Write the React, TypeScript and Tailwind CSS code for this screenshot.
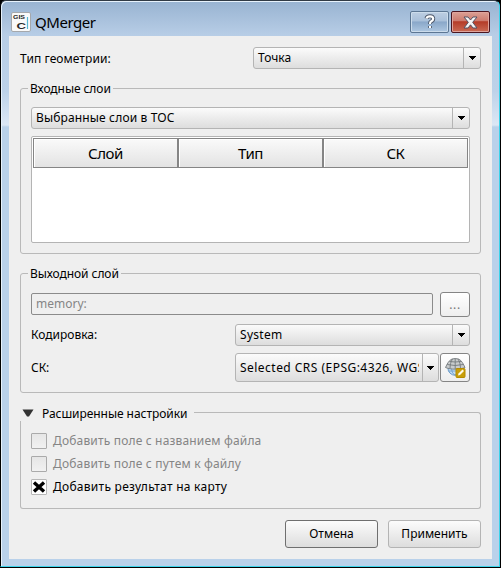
import type { ReactNode } from "react";

function Label({ children, className = "" }: { children: ReactNode; className?: string }) {
  return <span className={`inline-block whitespace-pre leading-[16px] ${className}`}>{children}</span>;
}

function Combo({ children, className = "", arrow = "w-[17px]" }: { children: ReactNode; className?: string; arrow?: string }) {
  return (
    <div className={`flex shrink-0 overflow-hidden rounded-[3px] border border-[#b4b4b4] bg-linear-to-b from-[#fbfbfb] to-[#dddddd] ${className}`}>
      <div className="flex min-w-0 flex-1 items-center overflow-hidden pl-[4px]">{children}</div>
      <div className={`flex shrink-0 items-center justify-center border-l border-[#b4b4b4] ${arrow}`}>
        <svg width="7" height="4" viewBox="0 0 7 4" shapeRendering="crispEdges"><path d="M0 0h7v1H6v1H5v1H4v1H3V3H2V2H1V1H0z" /></svg>
      </div>
    </div>
  );
}

function Check({ checked = false, children }: { checked?: boolean; children: ReactNode }) {
  return (
    <div className={`flex h-[16px] items-center gap-[6px] ${checked ? "text-black" : "text-[#858585]"}`}>
      <span className={`flex size-[16px] shrink-0 items-center justify-center rounded-[1px] border ${checked ? "border-[#b7b7b7] bg-white" : "border-[#aaa] bg-linear-to-b from-[#e6e6e6] to-[#f1f1f1]"}`}>
        {checked && (
          <svg width="14" height="14" viewBox="0 0 14 14" className="shrink-0"><path d="M2 2.500 12 11.500M12 2.500 2 11.500" stroke="#000" strokeWidth="3.400" /></svg>
        )}
      </span>
      {children}
    </div>
  );
}

function Globe() {
  return (
    <svg width="22" height="22" viewBox="0 0 22 22">
      <circle cx="11.200" cy="11" r="7.300" fill="#c3dcf3" stroke="#6799c8" />
      <path d="M7.500 10c0 4 1 7 3.500 8M14.500 10c0 4-1 7-3.500 8M4.500 14h13" fill="none" stroke="#6799c8" strokeWidth=".8" />
      <path d="M1.500 10.500C3 7.500 4.500 3.500 8 2q3.300-1 6.500 0c3.500 1.500 5 5.500 6.500 8.500-5 2.200-14.500 2.200-19.500 0z" fill="#c9cccd" stroke="#74797d" strokeWidth=".9" />
      <path d="M3.200 7.500q8 2 16 0M5.500 4.500q5.700 1 11.500 0M8.500 2C6.500 5 6.200 8 6 11.500M11.200 1.500V12M14 2c2 3 2.300 6 2.500 9.500" fill="none" stroke="#74797d" strokeWidth=".9" />
      <rect x="12" y="11.500" width="9" height="9" rx="1" fill="#c89e09" stroke="#b58c00" />
      <path d="m14 18.500.5-2 4-4 1.500 1.500-4 4z" fill="#fffbe7" />
    </svg>
  );
}

const group = "rounded-[3px] border border-[#b9b9b9]";
const pushButton = "flex h-[28px] w-[93px] items-center justify-center rounded-[3px] border bg-linear-to-b from-[#fcfcfc] to-[#dddddd]";

export default function App() {
  return (
    <div className="h-[568px] w-[501px] overflow-hidden bg-black text-black">
      <div className="flex h-[567px] w-[500px] flex-col rounded-t-[6px] border border-t-[#303a45] border-r-[#3bd3ea] border-b-[#3bd3ea] border-l-black bg-[#b9d1ea] bg-[linear-gradient(180deg,#98b3d1_0px,#b7cde6_34px,#bdd2e9_90px,#dce7f5_124px,#b9d1ea_126px)] shadow-[inset_1px_1px_0_#e7f2fc] [font-family:'Noto_Sans','Open_Sans',sans-serif] text-[12px]">
        <header className="flex h-[35px] shrink-0 items-start pl-[10px] pr-[9px]">
          <svg width="20" height="20" viewBox="0 0 20 20" className="mt-[11px] shrink-0">
            <rect x=".5" y=".5" width="19" height="19" rx="1.500" fill="#fafafa" stroke="#a5a8ac" />
            <text x="2" y="6.500" fontSize="6" fontWeight="700" fontFamily="Liberation Sans, sans-serif" textLength="12" lengthAdjust="spacingAndGlyphs" fill="#222">GIS</text>
            <text x="5.500" y="17.200" fontSize="9.500" fontWeight="700" fontFamily="Liberation Sans, sans-serif" textLength="9.500" lengthAdjust="spacingAndGlyphs" fill="#292929">C</text>
            <path d="M16.500 5v12" stroke="#55b6d2" strokeWidth="1.200" />
          </svg>
          <span className="mt-[11px] ml-[4px] flex-1 text-[15px] leading-[20px] tracking-[-0.45px]">QMerger</span>
          <div className="mt-[10px] flex gap-[2px]">
            <button className="flex h-[22px] w-[39px] items-center justify-center rounded-[2px] border border-[#5c7693] bg-[linear-gradient(#bdcee2_0%,#a8bfd9_47%,#88a6c8_48%,#aec7e1_100%)] shadow-[inset_0_0_0_1px_#ccdceb]">
              <svg width="12" height="16" viewBox="0 0 12 16"><path d="M2.500 4.500Q3 2.300 6 2.300t3.200 2.400Q9.200 6.500 7 7.500 6 8 6 10M6 12v2" fill="none" stroke="#4b5668" strokeWidth="4" /><path d="M2.500 4.500Q3 2.300 6 2.300t3.200 2.400Q9.200 6.500 7 7.500 6 8 6 10M6 12v2" fill="none" stroke="#fff" strokeWidth="2.200" /></svg>
            </button>
            <button className="flex h-[22px] w-[39px] items-center justify-center rounded-[2px] border border-[#4b1620] bg-[linear-gradient(#dba095_0%,#cc796c_46%,#b43b28_48%,#ca6b55_100%)] shadow-[inset_0_0_0_1px_#dfa49c]">
              <svg width="15" height="13" viewBox="0 0 15 13" className="shrink-0"><path d="M1 1h4l2.500 3L10 1h4L9.700 6.300 14 12h-4L7.500 8.800 5 12H1l4.300-5.700z" fill="#f5f5f5" stroke="#525263" /></svg>
            </button>
          </div>
        </header>

        <main className="ml-[8px] flex h-[523px] w-[483px] flex-col bg-[#efefef] px-[11px] pt-[11px]">
          <div className="flex h-[22px] shrink-0 items-center justify-between">
            <Label className="pt-[2px] tracking-[0.07px]">Тип геометрии:</Label>
            <Combo className="h-[22px] w-[228px]"><Label>Точка</Label></Combo>
          </div>

          <section className={`${group} mt-[19px] h-[166px] shrink-0 px-[10px]`}>
            <div className="-mt-[9px] ml-[-3px] h-[16px]"><Label className="bg-[#efefef] px-[2px] tracking-[-0.07px]">Входные слои</Label></div>
            <Combo className="mt-[11px] h-[22px] w-[439px]"><Label className="tracking-[0.15px]">Выбранные слои в TOC</Label></Combo>
            <div className="mt-[7px] h-[107px] w-[439px] rounded-[2px] border border-[#b4b4b4] bg-white p-[1px]">
              <div className="grid h-[30px] grid-cols-[145px_145px_145px] bg-[#efefef] text-[15px] tracking-[-0.4px]">
                {["Слой", "Тип", "СК"].map((name) => (
                  <div key={name} className="flex items-center justify-center border border-[#858585] bg-linear-to-b from-[#fafafa] to-[#e3e3e3] shadow-[inset_1px_1px_0_#fff]">{name}</div>
                ))}
              </div>
            </div>
          </section>

          <section className={`${group} mt-[19px] h-[120px] shrink-0 px-[10px]`}>
            <div className="-mt-[9px] ml-[-3px] h-[16px]"><Label className="bg-[#efefef] px-[2px] tracking-[-0.07px]">Выходной слой</Label></div>
            <div className="mt-[11px] flex justify-between">
              <div className="mt-[1px] flex h-[22px] w-[402px] items-center rounded-[2px] border border-[#8b8b8b] pl-[4px] text-[#858585]"><Label>memory:</Label></div>
              <button className="flex h-[25px] w-[30px] items-center justify-center rounded-[3px] border border-[#858585] bg-linear-to-b from-white to-[#eeeeee] tracking-[0.7px] text-[#777]">...</button>
            </div>
            <div className="mt-[7px] flex h-[22px] items-center justify-between">
              <Label>Кодировка:</Label>
              <Combo className="h-[22px] w-[235px]"><Label className="tracking-[0.3px]">System</Label></Combo>
            </div>
            <div className="mt-[7px] flex h-[29px] items-center">
              <Label className="flex-1">СК:</Label>
              <Combo className="h-[29px] w-[204px]" arrow="w-[16px]"><div className="w-[179px] shrink-0 overflow-hidden"><Label className="tracking-[0.47px]">Selected CRS (EPSG:4326, WGS 84)</Label></div></Combo>
              <button className="ml-[1px] flex h-[29px] w-[30px] items-center justify-center rounded-[3px] border border-[#858585] bg-linear-to-b from-white to-[#eeeeee]"><Globe /></button>
            </div>
          </section>

          <section className="mt-[12px] h-[104px] shrink-0">
            <div className="flex h-[16px]">
              <svg width="12" height="8" viewBox="0 0 12 8" className="mt-[4px] ml-[2px] shrink-0"><path d="M.5.500h11L7 7.500H5z" fill="#333" /></svg>
              <Label className="ml-[8px] w-[152px] pt-[1px] tracking-[-0.05px]">Расширенные настройки</Label>
              <div className="mt-[7px] h-[9px] flex-1 rounded-tr-[3px] border-t border-r border-[#b9b9b9]" />
            </div>
            <div className="flex h-[88px] flex-col gap-[7px] rounded-b-[3px] border-x border-b border-[#b9b9b9] bg-[#efefef] pt-[12px] pl-[10px]">
              <Check><Label className="tracking-[0.17px]">Добавить поле с названием файла</Label></Check>
              <Check><Label className="tracking-[0.18px]">Добавить поле с путем к файлу</Label></Check>
              <Check checked><Label className="tracking-[0.27px]">Добавить результат на карту</Label></Check>
            </div>
          </section>

          <div className="mt-[11px] flex justify-end gap-[10px]">
            <button className={`${pushButton} border-[#6f6f6f]`}><Label>Отмена</Label></button>
            <button className={`${pushButton} border-[#b4b4b4]`}><Label>Применить</Label></button>
          </div>
        </main>
      </div>
    </div>
  );
}
